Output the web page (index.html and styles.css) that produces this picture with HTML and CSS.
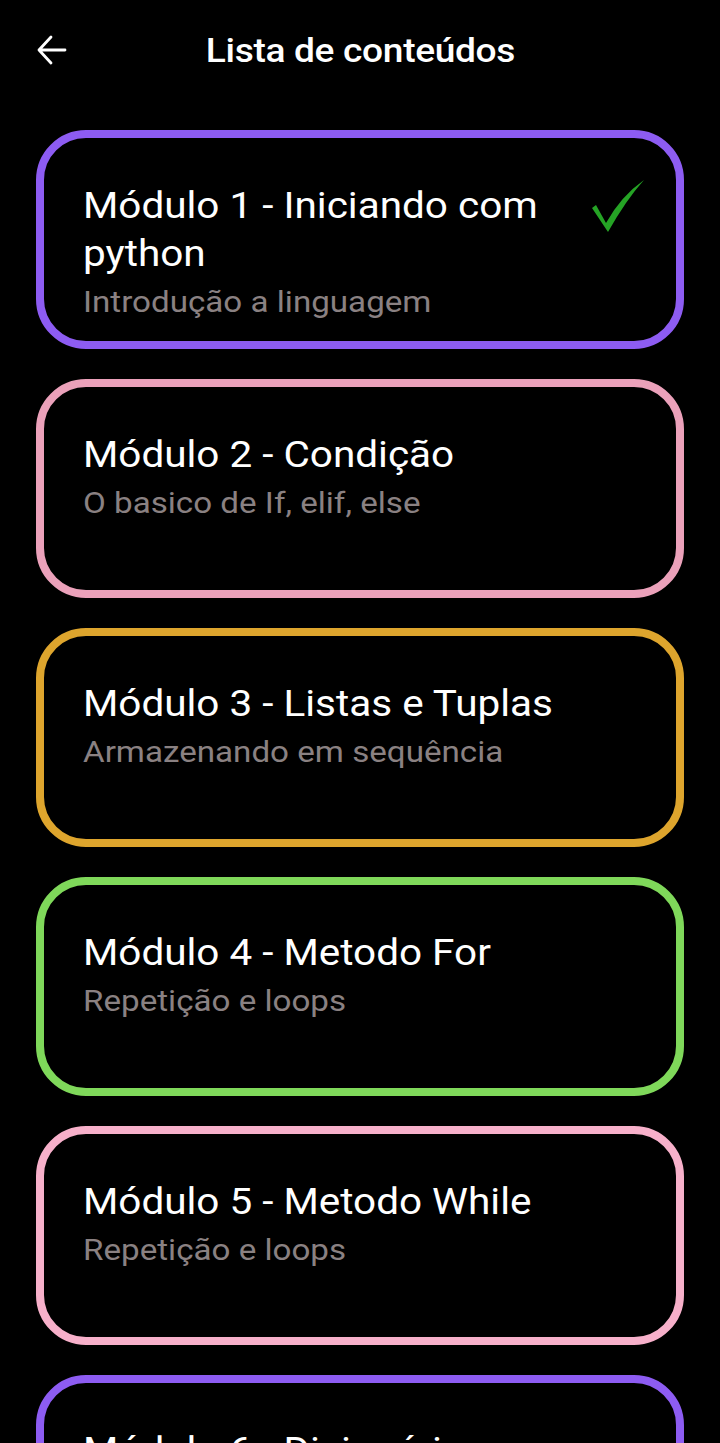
FILE: index.html
```html
<!DOCTYPE html>
<html lang="pt">
<head>
<meta charset="utf-8">
<link rel="stylesheet" href="styles.css">
</head>
<body>
<header class="topbar">
  <svg class="back" width="32" height="32" viewBox="0 0 32 32" fill="none" stroke="#fff" stroke-width="2.8" stroke-linecap="round" stroke-linejoin="round">
    <path d="M29 16H3M15 3L3 16l12 13"/>
  </svg>
  <h1 class="title">Lista de conteúdos</h1>
</header>
<main class="list">
  <div class="card c-purple">
    <div class="text">
      <div class="name">Módulo 1 - Iniciando com python</div>
      <div class="sub">Introdução a linguagem</div>
    </div>
    <svg class="check" width="56" height="56" viewBox="0 0 56 56">
      <path d="M3 30 L7 27 L17 45 Q32 18 55 2 Q37 22 19 54 Z" fill="#25a325"/>
    </svg>
  </div>
  <div class="card c-pink">
    <div class="text">
      <div class="name">Módulo 2 - Condição</div>
      <div class="sub">O basico de If, elif, else</div>
    </div>
  </div>
  <div class="card c-gold">
    <div class="text">
      <div class="name">Módulo 3 - Listas e Tuplas</div>
      <div class="sub">Armazenando em sequência</div>
    </div>
  </div>
  <div class="card c-green">
    <div class="text">
      <div class="name">Módulo 4 - Metodo For</div>
      <div class="sub">Repetição e loops</div>
    </div>
  </div>
  <div class="card c-rose">
    <div class="text">
      <div class="name">Módulo 5 - Metodo While</div>
      <div class="sub">Repetição e loops</div>
    </div>
  </div>
  <div class="card c-purple">
    <div class="text">
      <div class="name">Módulo 6 - Dicionários</div>
      <div class="sub">Chave e valor</div>
    </div>
  </div>
</main>
</body>
</html>
```

FILE: styles.css
```css
html, body {
  margin: 0;
  padding: 0;
  background: #000;
  color: #fff;
  font-family: Roboto, "Noto Sans", sans-serif;
  overflow: hidden;
  height: 1443px;
}
.topbar {
  position: relative;
  height: 100px;
  display: flex;
  align-items: center;
  justify-content: center;
}
.back {
  position: absolute;
  left: 36px;
  top: 34px;
}
.title {
  margin: 2px 0 0;
  font-size: 33px;
  font-weight: 500;
  letter-spacing: -0.3px;
  line-height: 40px;
  transform: scaleX(1.125);
  transform-origin: center;
}
.list {
  padding: 30px 36px 0;
  display: flex;
  flex-direction: column;
  gap: 30px;
}
.card {
  box-sizing: border-box;
  height: 219px;
  border: 8px solid;
  border-radius: 50px;
  padding: 44px 40px 0 39px;
  display: flex;
  align-items: flex-start;
  gap: 20px;
  flex-shrink: 0;
}
.text { flex: 1; }
.name {
  font-size: 36px;
  line-height: 48px;
  padding-right: 20px;
  transform: scaleX(1.124);
  transform-origin: left center;
}
.sub {
  font-size: 29.5px;
  line-height: 40px;
  margin-top: 4px;
  color: #8a8182;
  transform: scaleX(1.124);
  transform-origin: left center;
}
.check {
  margin-top: -4px;
  margin-right: -9px;
  flex-shrink: 0;
}
.c-purple { border-color: #8d5cf2; }
.c-pink { border-color: #eba1ba; }
.c-gold { border-color: #dea52d; }
.c-green { border-color: #7fd85a; }
.c-rose { border-color: #f7b0ca; }
```
